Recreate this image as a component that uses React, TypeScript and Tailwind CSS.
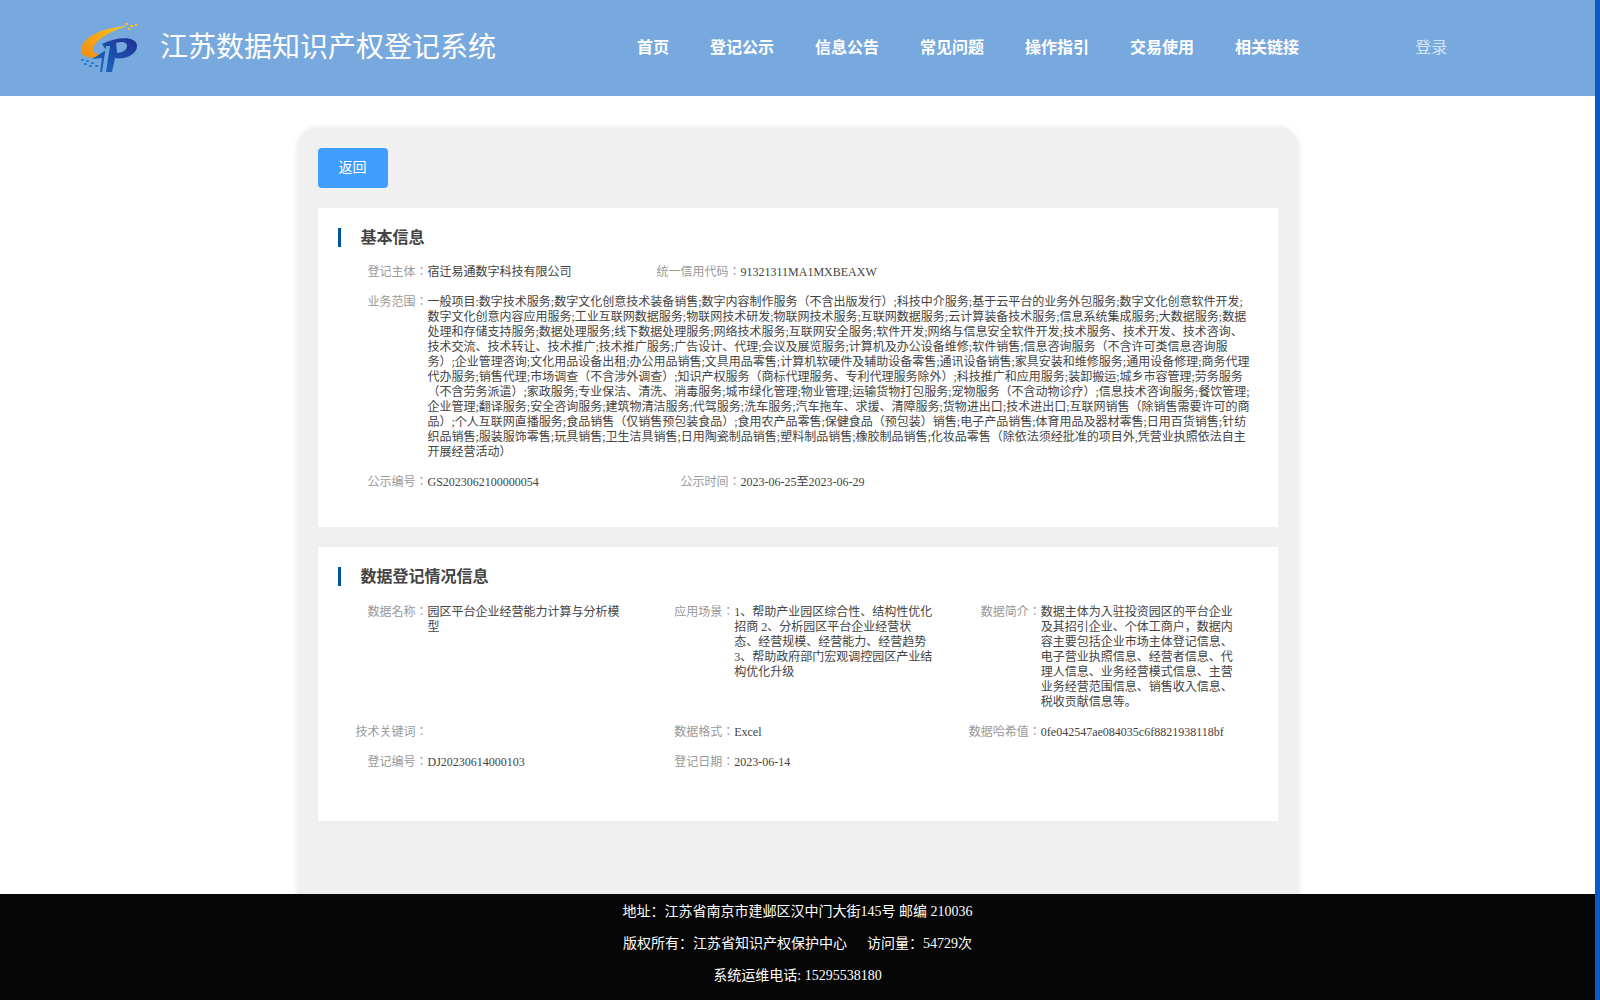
const navItems = ['首页', '登记公示', '信息公告', '常见问题', '操作指引', '交易使用', '相关链接']

const scope = '一般项目:数字技术服务;数字文化创意技术装备销售;数字内容制作服务（不含出版发行）;科技中介服务;基于云平台的业务外包服务;数字文化创意软件开发;数字文化创意内容应用服务;工业互联网数据服务;物联网技术研发;物联网技术服务;互联网数据服务;云计算装备技术服务;信息系统集成服务;大数据服务;数据处理和存储支持服务;数据处理服务;线下数据处理服务;网络技术服务;互联网安全服务;软件开发;网络与信息安全软件开发;技术服务、技术开发、技术咨询、技术交流、技术转让、技术推广;技术推广服务;广告设计、代理;会议及展览服务;计算机及办公设备维修;软件销售;信息咨询服务（不含许可类信息咨询服务）;企业管理咨询;文化用品设备出租;办公用品销售;文具用品零售;计算机软硬件及辅助设备零售;通讯设备销售;家具安装和维修服务;通用设备修理;商务代理代办服务;销售代理;市场调查（不含涉外调查）;知识产权服务（商标代理服务、专利代理服务除外）;科技推广和应用服务;装卸搬运;城乡市容管理;劳务服务（不含劳务派遣）;家政服务;专业保洁、清洗、消毒服务;城市绿化管理;物业管理;运输货物打包服务;宠物服务（不含动物诊疗）;信息技术咨询服务;餐饮管理;企业管理;翻译服务;安全咨询服务;建筑物清洁服务;代驾服务;洗车服务;汽车拖车、求援、清障服务;货物进出口;技术进出口;互联网销售（除销售需要许可的商品）;个人互联网直播服务;食品销售（仅销售预包装食品）;食用农产品零售;保健食品（预包装）销售;电子产品销售;体育用品及器材零售;日用百货销售;针纺织品销售;服装服饰零售;玩具销售;卫生洁具销售;日用陶瓷制品销售;塑料制品销售;橡胶制品销售;化妆品零售（除依法须经批准的项目外,凭营业执照依法自主开展经营活动）'

const Logo = () => (
    <svg width="60" height="52" viewBox="0 0 60 52" className="shrink-0">
        <defs>
            <linearGradient id="arc" x1="0" y1="1" x2="1" y2="0">
                <stop offset="0" stopColor="#f08a12" />
                <stop offset="1" stopColor="#fbc71c" />
            </linearGradient>
            <linearGradient id="pee" x1="0" y1="1" x2="1" y2="0">
                <stop offset="0" stopColor="#1a6fc4" />
                <stop offset="1" stopColor="#1f2f94" />
            </linearGradient>
        </defs>
        <path d="M47 4 C26 5 3 14 1 27 C0 33 5 36 18 36 L21 32 C13 32 11 29 14 24 C19 15 34 8 47 4 Z" fill="url(#arc)" />
        <path d="M22 22 C38 14 57 14 57 24 C57 34 42 38 35 36 L32 50 L20 50 L22 36 L12 37 L26 28 Z" fill="url(#pee)" />
        <path d="M36 21 C42 19 47 20 47 24 C47 28 42 31 37 31 Z" fill="#78a9de" />
        <path d="M26 24 L30 24 L26 50 L22 50 Z" fill="#6fa8e0" />
        <g fill="#f5c21d">
            <rect x="45" y="1" width="3" height="2" />
            <rect x="50" y="3" width="3" height="2" />
            <rect x="55" y="2" width="2" height="2" />
            <rect x="48" y="6" width="2" height="2" />
        </g>
        <g fill="#2c7fd0">
            <rect x="1" y="37" width="3" height="2" />
            <rect x="6" y="38" width="3" height="2" />
            <rect x="11" y="40" width="3" height="2" />
            <rect x="4" y="41" width="3" height="2" />
            <rect x="9" y="43" width="3" height="2" />
            <rect x="15" y="43" width="3" height="2" />
        </g>
    </svg>
)

const Field = ({ label, children }: { label: string; children?: React.ReactNode }) => (
    <div className="flex">
        <span className="w-[90px] shrink-0 text-right text-[#999]">{label}：</span>
        <div className="w-[200px] text-[#444]">{children}</div>
    </div>
)

const Heading = ({ children }: { children: React.ReactNode }) => (
    <h2 className="border-l-[3px] border-[#00549a] pl-[20px] text-base leading-[19px] font-bold text-[#444]">
        {children}
    </h2>
)

const App = () => {
    return <div className="flex h-screen overflow-hidden bg-white font-['Liberation_Serif','Noto_Sans_CJK_JP',serif]">
        <div className="flex min-w-0 flex-1 flex-col">
            <header className="flex h-24 shrink-0 items-center bg-[#78a9de] pl-20 font-['Liberation_Serif','Noto_Sans_CJK_SC',serif] text-white">
                <Logo />
                <h1 className="ml-5 text-[28px] leading-none">江苏数据知识产权登记系统</h1>
                <nav className="ml-[141px] flex gap-[41px] text-base font-bold">
                    {navItems.map((item) => <a key={item} className="cursor-pointer">{item}</a>)}
                </nav>
                <a className="ml-[116px] cursor-pointer text-base text-white/70">登录</a>
            </header>

            <main className="min-h-0 flex-1 overflow-hidden">
                <div className="mx-auto mt-8 h-[900px] w-[1000px] rounded-[20px] bg-[#f0f0f0] p-5 shadow-[0_0_6px_rgba(0,0,0,0.12)]">
                    <button className="h-10 w-[70px] cursor-pointer rounded bg-[#409eff] text-sm text-white">返回</button>

                    <section className="mt-5 h-[319px] bg-white p-5 text-xs leading-[15px]">
                        <Heading>基本信息</Heading>
                        <div className="mt-[18px] flex">
                            <span className="w-[90px] shrink-0 text-right text-[#999]">登记主体：</span>
                            <div className="w-[223px] text-[#444]">宿迁易通数字科技有限公司</div>
                            <span className="w-[90px] shrink-0 text-right text-[#999]">统一信用代码：</span>
                            <div className="text-[#444]">91321311MA1MXBEAXW</div>
                        </div>
                        <div className="mt-[15px] flex">
                            <span className="w-[90px] shrink-0 text-right text-[#999]">业务范围：</span>
                            <div className="w-[826px] text-[#444]">{scope}</div>
                        </div>
                        <div className="mt-[15px] flex">
                            <span className="w-[90px] shrink-0 text-right text-[#999]">公示编号：</span>
                            <div className="w-[223px] text-[#444]">GS2023062100000054</div>
                            <span className="w-[90px] shrink-0 text-right text-[#999]">公示时间：</span>
                            <div className="text-[#444]">2023-06-25至2023-06-29</div>
                        </div>
                    </section>

                    <section className="mt-5 h-[274px] bg-white p-5 text-xs leading-[15px]">
                        <Heading>数据登记情况信息</Heading>
                        <div className="mt-[19px] grid grid-cols-3 gap-y-[15px]">
                            <Field label="数据名称">园区平台企业经营能力计算与分析模型</Field>
                            <Field label="应用场景">1、帮助产业园区综合性、结构性优化招商 2、分析园区平台企业经营状态、经营规模、经营能力、经营趋势 3、帮助政府部门宏观调控园区产业结构优化升级</Field>
                            <Field label="数据简介">数据主体为入驻投资园区的平台企业及其招引企业、个体工商户，数据内容主要包括企业市场主体登记信息、电子营业执照信息、经营者信息、代理人信息、业务经营模式信息、主营业务经营范围信息、销售收入信息、税收贡献信息等。</Field>
                            <Field label="技术关键词" />
                            <Field label="数据格式">Excel</Field>
                            <Field label="数据哈希值">0fe042547ae084035c6f8821938118bf</Field>
                            <Field label="登记编号">DJ20230614000103</Field>
                            <Field label="登记日期">2023-06-14</Field>
                        </div>
                    </section>
                </div>
            </main>

            <footer className="relative h-[106px] shrink-0 bg-[#060606] pt-[2px] text-center font-['Liberation_Serif','Noto_Sans_CJK_SC',serif] text-sm leading-8 text-white">
                <p>地址：江苏省南京市建邺区汉中门大街145号 邮编 210036</p>
                <p>版权所有：江苏省知识产权保护中心<span className="ml-5">访问量：54729次</span></p>
                <p>系统运维电话: 15295538180</p>
            </footer>
        </div>
        <div className="w-[5px] shrink-0 bg-[#0a5cc4]" />
    </div>
}

export default App
